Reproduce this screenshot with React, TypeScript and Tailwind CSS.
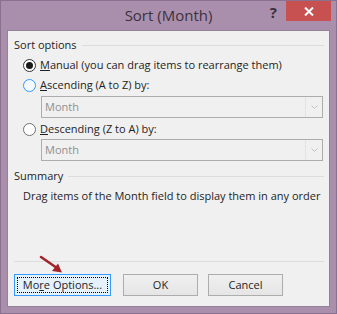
import React from 'react'

const font = { fontFamily: '"Open Sans", "Noto Sans", sans-serif' }

function Radio({ state }: { state: 'checked' | 'hover' | 'normal' }) {
  const border =
    state === 'checked' ? 'border-[#333333]' : state === 'hover' ? 'border-[#3399ff]' : 'border-[#707070]'
  const bg = state === 'hover' ? 'bg-[#f4f9ff]' : 'bg-white'
  return (
    <span className={`w-[13px] h-[13px] rounded-full border ${border} ${bg} flex items-center justify-center shrink-0`}>
      {state === 'checked' ? <span className="w-[7px] h-[7px] rounded-full bg-[#1a1a1a]" /> : null}
    </span>
  )
}

function DisabledSelect() {
  return (
    <div className="ml-[33px] w-[282px] h-[22px] border border-[#adadad] bg-[#f0f0f0] flex items-center">
      <span className="flex-1 pl-[3px] text-[#8f8f8f]">Month</span>
      <span className="w-[17px] h-[20px] border-l border-[#e3e3e3] flex items-center justify-center">
        <svg width="7" height="4" viewBox="0 0 7 4">
          <path d="M0.5 0.5 L3.5 3.5 L6.5 0.5" fill="none" stroke="#c2c2c2" strokeWidth="1" />
        </svg>
      </span>
    </div>
  )
}

function GroupHeader({ label }: { label: string }) {
  return (
    <div className="flex items-center h-[16px] pl-[6px] pr-[5px] gap-[5px]">
      <span className="text-[#1e1e1e]">{label}</span>
      <span className="flex-1 h-px bg-[#dcdcdc]" />
    </div>
  )
}

export default function App() {
  return (
    <div
      className="relative w-[337px] h-[314px] bg-[#aa8fad] border border-[#8b7190] flex flex-col text-[11px] leading-[16px]"
      style={font}
    >
      <div className="h-[29px] flex items-start relative shrink-0">
        <div className="absolute left-0 right-0 top-[4px] text-center text-[15px] leading-[20px] text-[#3c3140]">
          Sort (Month)
        </div>
        <div className="ml-auto flex items-start">
          <span className="mt-[2px] mr-[9px] text-[15px] leading-[18px] font-bold text-[#3a2f3e]">?</span>
          <span className="w-[45px] h-[20px] bg-[#c75050] flex items-center justify-center mr-[5px]">
            <svg width="10" height="9" viewBox="0 0 10 9">
              <path d="M1 0.5 L9 8.5 M9 0.5 L1 8.5" stroke="#ffffff" strokeWidth="2" />
            </svg>
          </span>
        </div>
      </div>

      <div className="mx-[6px] h-[277px] border border-[#95809a] bg-[#f0f0f0] flex flex-col text-[#1e1e1e]">
        <div className="mt-[6px]">
          <GroupHeader label="Sort options" />
        </div>

        <div className="mt-[2px] h-[20px] flex items-center pl-[15px] gap-[4px]">
          <Radio state="checked" />
          <span>
            <span className="underline">M</span>anual (you can drag items to rearrange them)
          </span>
        </div>
        <div className="h-[20px] flex items-center pl-[15px] gap-[4px]">
          <Radio state="hover" />
          <span>
            <span className="underline">A</span>scending (A to Z) by:
          </span>
        </div>
        <div className="mt-[1px]">
          <DisabledSelect />
        </div>
        <div className="mt-[1px] h-[20px] flex items-center pl-[15px] gap-[4px]">
          <Radio state="normal" />
          <span>
            <span className="underline">D</span>escending (Z to A) by:
          </span>
        </div>
        <div>
          <DisabledSelect />
        </div>

        <div className="mt-[7px]">
          <GroupHeader label="Summary" />
        </div>
        <div className="mt-[4px] pl-[15px] h-[16px] whitespace-nowrap">
          Drag items of the Month field to display them in any order
        </div>

        <div className="mt-[57px] mx-[6px] mr-[5px] h-px bg-[#dcdcdc]" />

        <div className="mt-[12px] flex pl-[6px] gap-[10px]">
          <button className="w-[97px] h-[22px] border border-[#3399ff] bg-[#e5f1fb] p-[2px]">
            <span className="w-full h-full border border-dotted border-black flex items-center justify-center">
              Mo<span className="underline">r</span>e Options...
            </span>
          </button>
          <button className="ml-[2px] w-[75px] h-[22px] border border-[#adadad] bg-gradient-to-b from-[#f0f0f0] to-[#e5e5e5]">
            OK
          </button>
          <button className="w-[75px] h-[22px] border border-[#adadad] bg-gradient-to-b from-[#f0f0f0] to-[#e5e5e5]">
            Cancel
          </button>
        </div>
      </div>

      <svg className="absolute left-[36px] top-[253px]" width="30" height="22" viewBox="0 0 30 22">
        <path d="M4 3 L20 14" stroke="#a3232b" strokeWidth="2.5" strokeLinecap="round" />
        <path d="M15 17 L25 18.5 L21 9.5 Z" fill="#a3232b" />
      </svg>
    </div>
  )
}
